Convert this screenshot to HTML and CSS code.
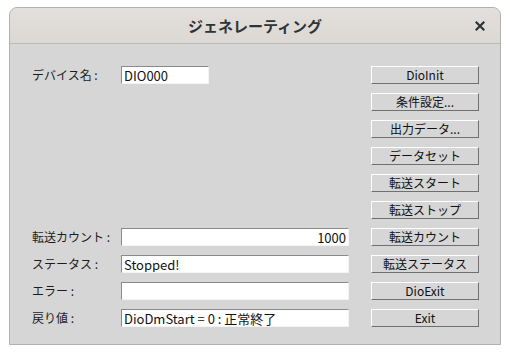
FILE: index.html
```html
<!DOCTYPE html>
<html lang="ja">
<head>
    <meta charset="UTF-8">
    <meta name="viewport" content="width=device-width, initial-scale=1.0">
    <title>ジェネレーティング</title>
    <link rel="stylesheet" href="styles.css">
</head>
<body>
  <div class="window">
    <div class="titlebar">
        <span class="title">ジェネレーティング</span>
        <svg class="close" width="10" height="10" viewBox="0 0 10 10">
            <path d="M1.5 1.5 L8.5 8.5 M8.5 1.5 L1.5 8.5" stroke="#2e3436" stroke-width="2.2" stroke-linecap="square"/>
        </svg>
    </div>

    <div class="panel">
        <label class="label r1">デバイス名 :</label>
        <input class="field short r1" type="text" value="DIO000">

        <label class="label r7">転送カウント :</label>
        <input class="field num r7" type="text" value="1000">
        <label class="label r8">ステータス :</label>
        <input class="field r8" type="text" value="Stopped!">
        <label class="label r9">エラー :</label>
        <input class="field r9" type="text" value="">
        <label class="label r10">戻り値 :</label>
        <input class="field r10" type="text" value="DioDmStart = 0 : 正常終了">

        <div class="buttons">
            <button>DioInit</button>
            <button>条件設定...</button>
            <button>出力データ...</button>
            <button>データセット</button>
            <button>転送スタート</button>
            <button>転送ストップ</button>
            <button>転送カウント</button>
            <button>転送ステータス</button>
            <button>DioExit</button>
            <button>Exit</button>
        </div>
    </div>
  </div>
</body>
</html>
```

FILE: styles.css
```css
body {
  margin: 0;
  background-color: #ffffff;
  font-family: "Noto Sans CJK JP", "Noto Sans", sans-serif;
  font-size: 13px;
  color: #1c1c1c;
}

.window {
  margin: 7px 0 0 9px;
  width: 490px;
  border: 1px solid #b3b1ae;
  border-radius: 8px 8px 0 0;
  background-color: #d6d6d6;
  overflow: hidden;
}

.titlebar {
  height: 35px;
  display: flex;
  align-items: center;
  justify-content: center;
  position: relative;
  background: linear-gradient(#e2dfdc, #dcd8d4);
  border-bottom: 1px solid #bcb8b3;
}

.title {
  font-size: 15px;
  font-weight: bold;
  color: #2e3436;
}

.close {
  position: absolute;
  right: 15px;
  top: 13px;
}

.panel {
  display: grid;
  grid-template-columns: 89px 228px 130px;
  grid-template-rows: repeat(10, 18px);
  row-gap: 9px;
  padding: 22px 22px 17px 22px;
  align-items: center;
}

.label {
  grid-column: 1;
  white-space: nowrap;
  font-size: 12px;
  line-height: 18px;
}

.field {
  grid-column: 2;
  box-sizing: border-box;
  height: 18px;
  width: 100%;
  margin: 0;
  padding: 0 2px;
  font-family: inherit;
  font-size: 13px;
  color: #111;
  background-color: #ffffff;
  border: 1px solid;
  border-color: #8a8a8a #f4f4f4 #f4f4f4 #8a8a8a;
  outline: none;
}

.field.short {
  width: 88px;
}

.field.num {
  text-align: right;
}

.r1 { grid-row: 1; }
.r7 { grid-row: 7; }
.r8 { grid-row: 8; }
.r9 { grid-row: 9; }
.r10 { grid-row: 10; }

.buttons {
  grid-column: 3;
  grid-row: 1 / 11;
  display: grid;
  grid-template-rows: repeat(10, 18px);
  row-gap: 9px;
  padding-left: 22px;
}

.buttons button {
  box-sizing: border-box;
  width: 108px;
  height: 18px;
  margin: 0;
  padding: 0;
  font-family: inherit;
  font-size: 12px;
  line-height: 16px;
  color: #111;
  background-color: #d6d6d6;
  border: 1px solid;
  border-color: #ffffff #6f6f6f #6f6f6f #ffffff;
}
```
